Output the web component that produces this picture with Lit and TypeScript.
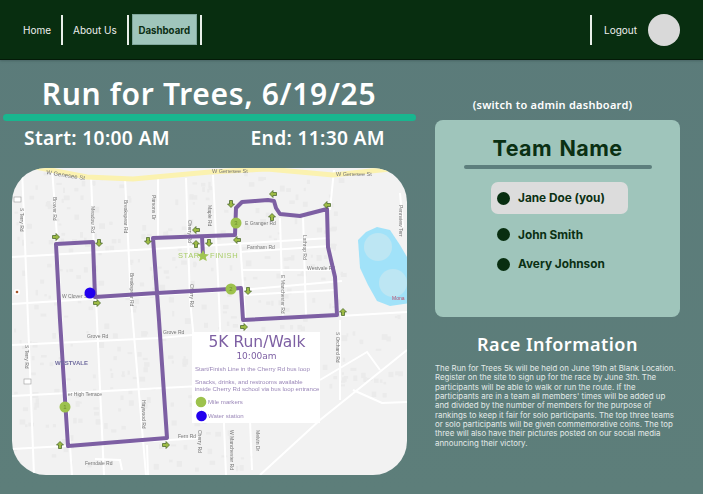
import { LitElement, html, css, svg } from "lit";
import { customElement } from "lit/decorators.js";

const ROADS: string[] = [
  "M12 257 L153 249 L330 238", "M12 304 L90 299 L240 290 L342 281", "M12 345 L160 338 L192 335", "M12 396 L200 386 L215 384",
  "M12 449 L170 440 L200 438", "M52 168 L58 250 L62 330 L72 475", "M22 168 L28 320 L34 475", "M91 176 L96 300 L104 475",
  "M125 178 L131 300 L146 475", "M158 178 L158 240", "M186 178 L190 300 L202 420", "M213 175 L219 300 L226 475",
  "M240 240 L246 330", "M280 218 L283 320", "M303 216 L306 315", "M334 170 L330 210", "M240 252 L330 246", "M241 270 L335 270",
  "M243 295 L335 290", "M340 316 L407 312", "M340 320 L340 400", "M320 380 L367 352 L380 370", "M260 475 L320 420 L407 350",
  "M353 390 L382 403 L407 402", "M400 193 L403 227", "M95 459 L120 460 L122 470", "M147 445 L148 475", "M250 420 L252 470"
];
const LABELS: [number, number, string, number][] = [
  [212, 173, "W Genesee St", 5.5], [336, 176, "W Genesee St", 5.5], [245, 225, "E Granger Rd", 5],
  [247, 249, "Farnham Rd", 5], [307, 270, "Westvale Rd", 5], [62, 298, "W Clover St", 5], [87, 338, "Grove Rd", 5],
  [163, 334, "Grove Rd", 5], [68, 396, "er High Terrace", 5], [85, 465, "Ferndale Rd", 5], [178, 438, "Fern Rd", 5]
];
const VLABELS: [number, number, string][] = [
  [20, 208, "S Terry Rd"], [53, 197, "Brower Rd"], [91, 206, "Meadow Rd"], [124, 200, "Breakspear Rd"], [152, 195, "Parsons Dr"],
  [130, 273, "Breakspear Rd"], [188, 220, "Cherry Rd"], [190, 284, "Cherry Rd"], [208, 205, "Maple Rd"], [281, 275, "E Manchester Rd"],
  [303, 235, "Lathrop Rd"], [25, 345, "S Terry Rd"], [142, 400, "Haywood Rd"], [198, 430, "Cherry Rd"], [336, 332, "S Orchard Rd"],
  [399, 205, "Pennview Terr"], [256, 430, "Melvin Dr"], [230, 430, "W Manchester Rd"]
];
const ARROWS: [number, number, number][] = [
  [56, 237, 0], [99, 243, 90], [148, 241, 90], [196, 230, 180], [196, 244, -90], [209, 243, 90], [97, 303, 0], [273, 194, 180],
  [231, 204, 90], [327, 205, 180], [272, 217, -90], [237, 240, 180], [248, 291, 90], [343, 312, -90], [244, 327, 0], [60, 445, -90], [166, 445, 0]
];
const MARKERS: [number, number, string][] = [[236, 223, "3"], [231, 289, "2"], [65, 407, "1"]];

function blocks() {
  const out: { x: number; y: number; w: number; h: number }[] = [];
  let seed = 7;
  const rnd = () => (seed = (seed * 16807) % 2147483647) / 2147483647;
  for (let i = 0; i < 520; i++) {
    out.push({ x: 14 + rnd() * 390, y: 172 + rnd() * 300, w: 2 + rnd() * 4, h: 2 + rnd() * 4 });
  }
  return out.filter((b) => !(b.x > 345 && b.y < 310) && !(b.x > 250 && b.y > 395));
}
const BLOCKS = blocks();

@customElement("app-root")
export class AppRoot extends LitElement {
  static styles = css`
    :host { display: block; width: 703px; height: 494px; overflow: hidden; font-family: Inter, "Liberation Sans", sans-serif; color: #fff;
      background: linear-gradient(#5b7b7a, #5d7e7a); }
    header { height: 60px; box-sizing: border-box; background: #082e10; border-bottom: 1px solid #041a08; box-shadow: 0 1px 2px #4a6665;
      display: flex; align-items: center; padding: 0 23px 0 23px; font-size: 10px; color: #eee; }
    .item { display: flex; align-items: center; height: 30px; }
    .sep { width: 2px; height: 30px; background: #e9efe9; }
    .home { margin-right: 10px; }
    .about { margin: 0 10px 0 10px; }
    .dash { width: 65px; height: 31px; margin: 0 3px 0 3px; box-sizing: border-box; background: #9fc5bb; border: 1px solid #80a79c;
      color: #0b2f14; font-weight: 700; display: flex; align-items: center; justify-content: center; padding-top: 2px; font-size: 9.7px; }
    .grow { flex: 1; }
    .logout { margin: 0 11px 0 12px; }
    .avatar { width: 32px; height: 32px; border-radius: 50%; background: #d9d9d9; }
    main { display: grid; grid-template-columns: 435px 245px; padding-top: 15px; }
    .left { display: flex; flex-direction: column; align-items: stretch; }
    h1 { margin: 0 0 0 3px; width: 412px; text-align: center; font: 600 30px/38px "Noto Sans", sans-serif; letter-spacing: 0.68px; color: #fff; }
    .bar { margin: 1px 0 0 3px; width: 413px; height: 7px; border-radius: 4px; background: #18b68f; }
    .times { display: flex; justify-content: space-between; margin: 4px 0 0 24px; width: 361px;
      font: 600 19.2px/26px "Noto Sans", sans-serif; letter-spacing: 0.33px; }
    .map { margin: 17px 0 0 12px; width: 395px; height: 307px; border-radius: 34px; overflow: hidden; background: #f2f2f2; }
    .map svg { display: block; filter: blur(0.35px); }
    .right { display: flex; flex-direction: column; align-items: stretch; }
    .switch { margin: 22px 10px 0 0; text-align: center; font: 600 11px/16px "Noto Sans", sans-serif; letter-spacing: 0.25px; }
    .card { margin-top: 7px; height: 197px; box-sizing: border-box; background: #9fc5bb; border-radius: 8px; padding-top: 12px; color: #0b3013;
      display: flex; flex-direction: column; align-items: center; }
    h2 { margin: 0; font: 700 21.5px/32px Inter, sans-serif; letter-spacing: 0.4px; word-spacing: 2px; color: #0b3013; }
    .rule { width: 188px; height: 4px; border-radius: 2px; background: #5d7f7d; margin-top: 1px; }
    .members { margin: 13px 0 0 4px; padding: 0; list-style: none; width: 137px; }
    li { display: flex; align-items: center; gap: 8px; padding: 0 6px; height: 32px; font-size: 11.8px; font-weight: 700; }
    li.me { background: #dcdcdc; border-radius: 7px; margin-bottom: 6px; }
    li.other { height: 29.5px; }
    .dot { width: 13px; height: 13px; border-radius: 50%; background: #082e10; flex: none; }
    h3 { margin: 14px 0 0 0; text-align: center; font: 600 18px/26px "Noto Sans", sans-serif; letter-spacing: 0.5px; color: #fff; }
    p { margin: 7px 0 0 0; font-size: 7.9px; line-height: 9.35px; color: #e3eae8; width: 245px; }
    .road { fill: none; stroke: #fff; stroke-width: 2; }
    .route { fill: none; stroke: #7d5fa3; stroke-width: 4; stroke-linejoin: round; }
    .blk { fill: #ebebeb; }
    .lbl { fill: #777; font-family: "Liberation Sans", sans-serif; }
    .sf { fill: #a9cd68; font: 7.5px "Liberation Sans", sans-serif; letter-spacing: 0.6px; }
    .mk { fill: #9dc24d; }
    .mkt { fill: #6e8f2c; font: 6px "Liberation Sans", sans-serif; text-anchor: middle; }
    .arrow { fill: #9dbb45; stroke: #3f5f22; stroke-width: 0.7; }
    .lg1 { fill: #7d5fa3; font: 15.5px "DejaVu Sans", sans-serif; text-anchor: middle; }
    .lg2 { fill: #7d5fa3; font: 9px "DejaVu Sans", sans-serif; text-anchor: middle; }
    .lg3 { fill: #9a87b8; font: 6.1px "Liberation Sans", sans-serif; }
    .wv { fill: #6f6b9e; font: 600 6px "Liberation Sans", sans-serif; }
    .gen { fill: #777; font: 6px "Liberation Sans", sans-serif; }
  `;

  private mapSvg() {
    return svg`<svg width="395" height="307" viewBox="12 168 395 307">
      ${BLOCKS.map((b) => svg`<rect class="blk" x=${b.x} y=${b.y} width=${b.w} height=${b.h}></rect>`)}
      ${ROADS.map((d) => svg`<path class="road" d=${d}></path>`)}
      <path d="M30 166 L87 177 L133 179 L210 172 L267 169 L333 175 L390 169 L410 168" fill="none" stroke="#fbf2b0" stroke-width="5"></path>
      <text class="gen" transform="translate(46 174) rotate(9)">W Genesee St</text>
      <path d="M358 240 L366 232 L377 227 L390 230 L400 245 L410 262 V303 L390 306 L377 301 L368 285 L360 268 Z" fill="#a1e2f9"></path>
      <circle cx="378" cy="247" r="14" fill="#bde6f3"></circle><circle cx="393" cy="283" r="14" fill="#bde6f3"></circle>
      <text x="392" y="300" font-size="5" fill="#c0506c" font-family="Liberation Sans">Mona</text>
      ${LABELS.map(([x, y, t, s]) => svg`<text class="lbl" x=${x} y=${y} font-size=${s}>${t}</text>`)}
      ${VLABELS.map(([x, y, t]) => svg`<text class="lbl" transform="translate(${x} ${y}) rotate(90)" font-size="5">${t}</text>`)}
      <rect x="14" y="197" width="7" height="5" fill="#fff" stroke="#999" stroke-width=".6"></rect>
      <rect x="24" y="379" width="7" height="5" fill="#fff" stroke="#999" stroke-width=".6"></rect>
      <circle cx="17" cy="292" r="3" fill="#fff"></circle><circle cx="17" cy="292" r="1.3" fill="#a8562a"></circle>
      <path class="route" d="M93 242 L56 244 L60 320 L68 446 L167 438 L159 320 L153 238 L235 235 L236 208 L242 202 L268 200 L274 201 L276 208 L280 214 L300 216 L327 209 L328 247 L335 277 L337 315 L243 320 L241 288 L230 289 L157 293 L95 297 Z"></path>
      <path class="route" d="M202 237 L203 255"></path>
      <text class="sf" x="178" y="258">START</text>
      <path d="M203 250 L204.8 254 L209 254.4 L205.8 257 L206.8 261 L203 259 L199.2 261 L200.2 257 L197 254.4 L201.2 254 Z" fill="#a0c552"></path>
      <text class="sf" x="210" y="258">FINISH</text>
      ${ARROWS.map(([x, y, r]) => svg`<path class="arrow" transform="translate(${x} ${y}) rotate(${r})" d="M-3.5 -1.5 H0 V-3.5 L3.5 0 L0 3.5 V1.5 H-3.5 Z"></path>`)}
      ${MARKERS.map(([x, y, t]) => svg`<circle class="mk" cx=${x} cy=${y} r="5.5"></circle><text class="mkt" x=${x} y=${y + 2}>${t}</text>`)}
      <circle cx="90" cy="293" r="5.5" fill="#2200ee"></circle>
      <text class="wv" x="55" y="365">WESTVALE</text>
      <rect x="192" y="332" width="128" height="91" fill="#fff"></rect>
      <text class="lg1" x="257" y="347">5K Run/Walk</text>
      <text class="lg2" x="256.5" y="359">10:00am</text>
      <text class="lg3" x="195" y="370.500">Start/Finish Line in the Cherry Rd bus loop</text>
      <text class="lg3" x="195" y="384">Snacks, drinks, and restrooms available</text>
      <text class="lg3" x="195" y="390.500">inside Cherry Rd school via bus loop entrance</text>
      <circle class="mk" cx="201" cy="402" r="5.3"></circle>
      <text class="lg3" x="208" y="404">Mile markers</text>
      <circle cx="201.500" cy="416" r="5.3" fill="#2200ee"></circle>
      <text class="lg3" x="208" y="417.500">Water station</text>
    </svg>`;
  }

  render() {
    return html`
      <header>
        <span class="item home">Home</span><span class="sep"></span>
        <span class="item about">About Us</span><span class="sep"></span>
        <span class="dash">Dashboard</span><span class="sep"></span>
        <span class="grow"></span>
        <span class="sep"></span><span class="item logout">Logout</span>
        <span class="avatar"></span>
      </header>
      <main>
        <section class="left">
          <h1>Run for Trees, 6/19/25</h1>
          <div class="bar"></div>
          <div class="times"><span>Start: 10:00 AM</span><span>End: 11:30 AM</span></div>
          <div class="map">${this.mapSvg()}</div>
        </section>
        <section class="right">
          <div class="switch">(switch to admin dashboard)</div>
          <div class="card">
            <h2>Team Name</h2>
            <div class="rule"></div>
            <ul class="members">
              <li class="me"><span class="dot"></span>Jane Doe (you)</li>
              <li class="other"><span class="dot"></span>John Smith</li>
              <li class="other"><span class="dot"></span>Avery Johnson</li>
            </ul>
          </div>
          <h3>Race Information</h3>
          <p>The Run for Trees 5k will be held on June 19th at Blank Location. Register on the site to sign up for the race by June 3th. The participants will be able to walk or run the route. If the participants are in a team all members' times will be added up and divided by the number of members for the purpose of rankings to keep it fair for solo participants. The top three teams or solo participants will be given commemorative coins. The top three will also have their pictures posted on our social media announcing their victory.</p>
        </section>
      </main>
    `;
  }
}
